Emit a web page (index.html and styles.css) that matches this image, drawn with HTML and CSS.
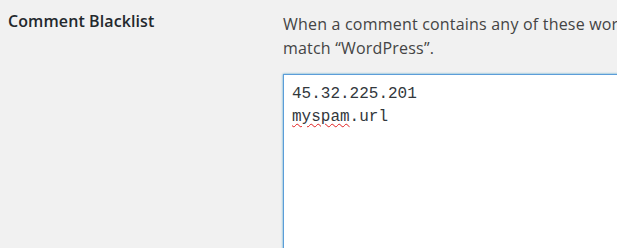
FILE: index.html
```html
<!DOCTYPE html>
<html>
<head>
<meta charset="utf-8">
<link rel="stylesheet" href="styles.css">
</head>
<body>
<div class="row">
  <div class="label">Comment Blacklist</div>
  <div class="field">
    <p class="desc"><span class="line">When a comment contains any of these words in its content, name, URL, email, or IP, it will be put in the trash. One word or IP per line. It will match inside words, so “press” will</span><br><span class="line">match “WordPress”.</span></p>
    <div class="textarea"><div>45.32.225.201</div><div><span class="misspelled">myspam</span>.url</div></div>
  </div>
</div>
</body>
</html>
```
FILE: styles.css
```css
html, body {
  margin: 0;
  padding: 0;
  background: #f1f1f1;
  overflow: hidden;
  width: 617px;
  height: 248px;
}
.row {
  display: grid;
  grid-template-columns: 275px 600px;
  padding-left: 8px;
  padding-top: 9px;
}
.label {
  font-family: "Open Sans", sans-serif;
  font-weight: 600;
  font-size: 16px;
  line-height: 24px;
  letter-spacing: 0.1px;
  color: #23282d;
}
.desc {
  margin: 0;
  font-family: "Open Sans", sans-serif;
  font-size: 16px;
  line-height: 24px;
  letter-spacing: 0.2px;
  color: #444;
  padding-top: 3px;
}
.line {
  white-space: nowrap;
}
.textarea {
  margin-top: 14px;
  width: 560px;
  height: 240px;
  background: #fff;
  border: 1px solid #5b9dd9;
  box-shadow: 0 0 2px rgba(30, 140, 190, .8);
  padding: 8px 8px;
  font-family: "Liberation Mono", monospace;
  font-size: 16px;
  line-height: 23px;
  color: #32373c;
}
.misspelled {
  text-decoration: underline wavy #e02020;
  text-decoration-thickness: 1px;
  text-underline-offset: 2px;
}
```
